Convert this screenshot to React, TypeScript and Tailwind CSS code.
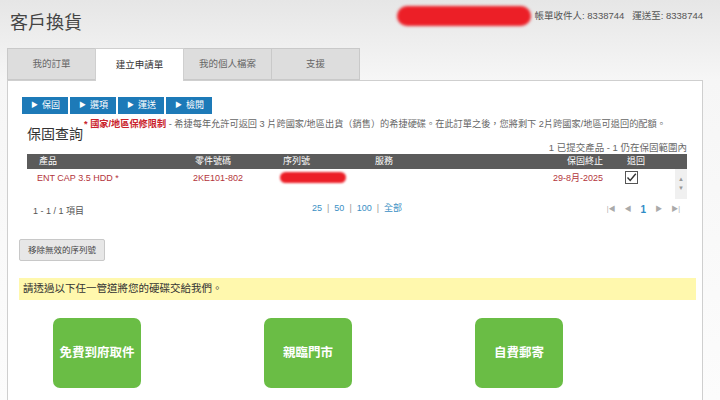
import React from "react"

const tabs = ["我的訂單", "建立申請單", "我的個人檔案", "支援"]
const steps = ["保固", "選項", "運送", "檢閱"]
const channels = ["免費到府取件", "親臨門市", "自費郵寄"]

const Check = () => (
  <div className="w-[13px] h-[13px] border border-[#555] bg-white flex items-center justify-center">
    <svg width="11" height="11" viewBox="0 0 11 11">
      <path d="M1.5 5.5 L4.2 8.4 L9.8 1.8" fill="none" stroke="#333" strokeWidth="1.4" />
    </svg>
  </div>
)

const App = () => {
  return (
    <div className="w-[720px] h-[400px] overflow-hidden bg-linear-to-b from-[#e6e6e6] via-[#f6f6f6] via-20% to-[#fcfcfc] font-['Liberation_Sans','Noto_Sans_CJK_TC',sans-serif] text-[#333]">
      <header className="flex justify-between h-[48px]">
        <h1 className="pl-[10px] pt-[11px] text-[18px] leading-[24px] text-[#444]">客戶換貨</h1>
        <div className="flex items-start pt-[5px] pr-[17px]">
          <div className="w-[134px] h-[20px] mt-[1px] rounded-full bg-[#ec1f27] blur-[1.5px]" />
          <div className="ml-[4px] mt-[5px] text-[9.5px] leading-[12px] text-[#555] whitespace-nowrap">
            帳單收件人: 8338744 &nbsp; 運送至: 8338744
          </div>
        </div>
      </header>

      <nav className="flex ml-[7px] h-[32px]">
        {tabs.map((t, i) => (
          <div
            key={t}
            className={
              i === 1
                ? "w-[89px] flex items-center justify-center text-[9.5px] text-[#333] bg-white border-t border-x border-[#cfcfcf] relative z-10 -mb-px -ml-px"
                : "w-[89px] flex items-center justify-center text-[9.5px] text-[#666] bg-[#dddddd] border border-[#c9c9c9] -ml-px first:ml-0"
            }
          >
            {t}
          </div>
        ))}
      </nav>

      <section className="ml-[7px] w-[696px] h-[330px] bg-white border border-[#cfcfcf]">
        <div className="flex gap-[2px] ml-[14px] mt-[16px]">
          {steps.map((s) => (
            <div key={s} className="w-[46px] h-[17px] bg-[#1d7ab8] text-white text-[9px] flex items-center pl-[9px] gap-[4px]">
              <span className="text-[7px]">▶</span>
              {s}
            </div>
          ))}
        </div>

        <div className="flex items-start ml-[19px] mt-[4px]">
          <h2 className="text-[14px] leading-[18px] mt-[7px] text-[#333]">保固查詢</h2>
          <p className="ml-[1px] text-[9.2px] leading-[12px] text-[#666] whitespace-nowrap">
            <span className="text-[#c9222b] font-bold">* 國家/地區保修限制</span>
            {" "}- 希捷每年允許可返回 3 片跨國家/地區出貨（銷售）的希捷硬碟。在此訂單之後，您將剩下 2片跨國家/地區可退回的配額。
          </p>
        </div>

        <div className="ml-[19px] w-[660px]">
          <div className="text-right text-[9.5px] leading-[12px] text-[#666] -mt-[1px]">
            1 已提交產品 - 1 仍在保固範圍內
          </div>

          <div className="grid grid-cols-[156px_88px_92px_164px_80px_68px_12px] h-[15px] bg-[#5b5b5b] text-white text-[9px] items-center">
            <div className="pl-[12px]">產品</div>
            <div className="pl-[12px]">零件號碼</div>
            <div className="pl-[12px]">序列號</div>
            <div className="pl-[12px]">服務</div>
            <div className="text-right pr-[4px]">保固終止</div>
            <div className="pl-[20px]">退回</div>
            <div />
          </div>

          <div className="flex h-[30px]">
            <div className="grid grid-cols-[156px_88px_92px_164px_80px_68px] items-start pt-[2px] text-[9px] leading-[12px] text-[#b3353b] w-[648px]">
              <div className="pl-[10px] pt-[1px]">ENT CAP 3.5 HDD *</div>
              <div className="pl-[10px] pt-[1px]">2KE101-802</div>
              <div className="pl-[9px] pt-[1px]">
                <div className="w-[66px] h-[11px] rounded-full bg-[#ec1f27] blur-[1.2px]" />
              </div>
              <div />
              <div className="text-right pr-[4px] pt-[1px]">29-8月-2025</div>
              <div className="pl-[18px]">
                <Check />
              </div>
            </div>
            <div className="w-[12px] bg-[#f0f0f0] flex flex-col items-center justify-between py-[6px] text-[6px] text-[#999]">
              <span>▲</span>
              <span>▼</span>
            </div>
          </div>

          <div className="flex items-center h-[20px] text-[9px]">
            <div className="w-[285px] pl-[6px] pt-[5px] text-[#555]">1 - 1 / 1 項目</div>
            <div className="text-[#3b8fc4] flex gap-[5px]">
              <span>25</span><span className="text-[#999]">|</span>
              <span>50</span><span className="text-[#999]">|</span>
              <span>100</span><span className="text-[#999]">|</span>
              <span>全部</span>
            </div>
            <div className="ml-auto mr-[7px] flex items-center gap-[9px] text-[7px] text-[#aaa]">
              <span>|◀</span>
              <span>◀</span>
              <span className="text-[10px] font-bold text-[#2f8bc6]">1</span>
              <span>▶</span>
              <span>▶|</span>
            </div>
          </div>
        </div>

        <button className="ml-[11px] mt-[20px] w-[86px] h-[22px] bg-[#e7e7e7] border border-[#c8c8c8] rounded-[2px] text-[8.5px] text-[#444]">
          移除無效的序列號
        </button>

        <div className="ml-[11px] mr-[6px] mt-[17px] h-[22px] bg-[#fff8ad] flex items-center pl-[4px] text-[10.5px] text-[#333]">
          請透過以下任一管道將您的硬碟交給我們。
        </div>

        <div className="flex gap-[123px] ml-[45px] mt-[18px]">
          {channels.map((c) => (
            <div key={c} className="w-[88px] h-[70px] rounded-[7px] bg-[#6abd45] text-white text-[12.5px] font-bold flex items-center justify-center">
              {c}
            </div>
          ))}
        </div>
      </section>
    </div>
  )
}

export default App
